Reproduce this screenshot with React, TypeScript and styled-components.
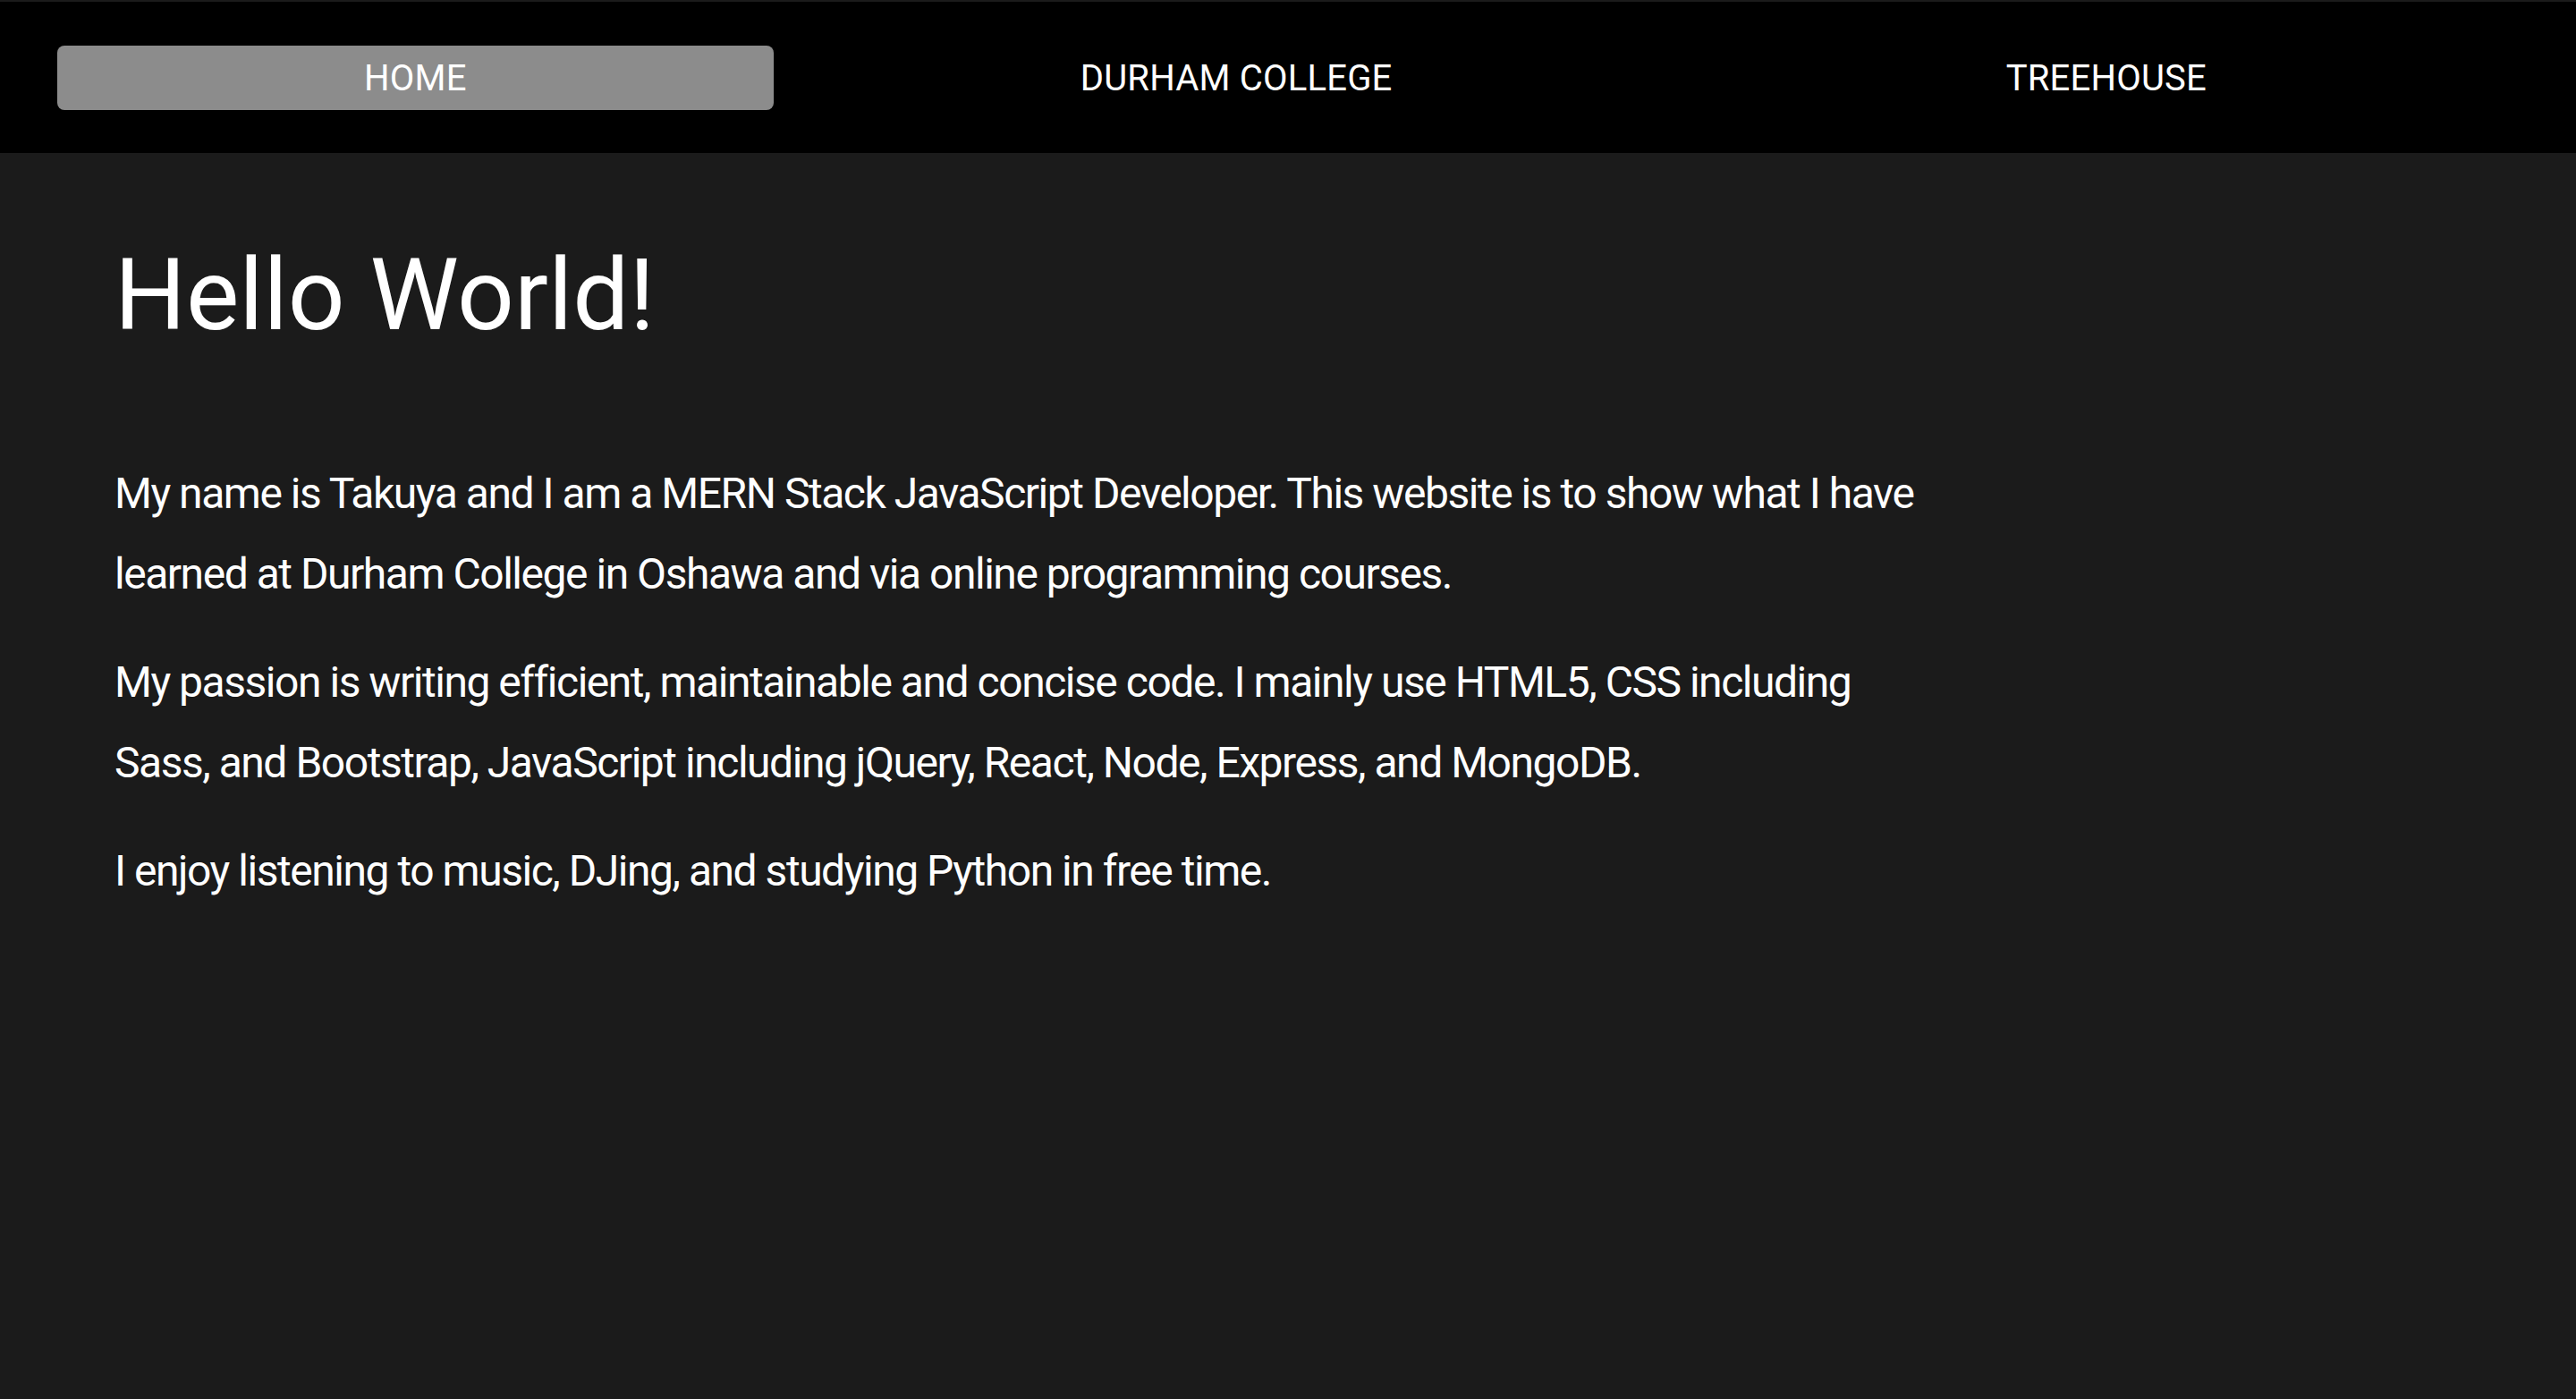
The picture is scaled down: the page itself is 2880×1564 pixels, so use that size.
import React from "react";
import styled, { createGlobalStyle } from "styled-components";

const GlobalStyle = createGlobalStyle`
  html, body {
    margin: 0;
    padding: 0;
    background: #1b1b1b;
  }
  body {
    font-family: Roboto, "Liberation Sans", sans-serif;
    color: #ffffff;
  }
  * { box-sizing: border-box; }
`;

const Page = styled.div`
  min-height: 1564px;
  background: #1b1b1b;
  padding-top: 2px;
  display: flex;
  flex-direction: column;
`;

const NavBar = styled.nav`
  height: 169px;
  background: #000000;
  display: flex;
  align-items: center;
  padding: 0 70px 0 64px;
`;

const NavItem = styled.a<{ $active?: boolean }>`
  flex: 1 1 auto;
  height: 72px;
  line-height: 74px;
  text-align: center;
  font-size: 40px;
  letter-spacing: 0.2px;
  color: #ffffff;
  text-decoration: none;
  border-radius: 8px;
  padding: 0 20px;
  background: ${(p) => (p.$active ? "#8c8c8c" : "transparent")};
`;

const Main = styled.main`
  padding: 92px 128px 0 128px;
`;

const Title = styled.h1`
  margin: 0 0 110px 0;
  font-size: 112px;
  font-weight: 400;
  line-height: 1.2;
`;

const Para = styled.p`
  margin: 0 0 31px 0;
  max-width: 2040px;
  font-size: 48px;
  line-height: 90px;
  letter-spacing: -1.47px;
  font-weight: 400;
`;

export default function App() {
  return (
    <>
      <GlobalStyle />
      <Page>
        <NavBar>
          <NavItem $active href="#">HOME</NavItem>
          <NavItem href="#">DURHAM COLLEGE</NavItem>
          <NavItem href="#">TREEHOUSE</NavItem>
        </NavBar>
        <Main>
          <Title>Hello World!</Title>
          <Para>
            My name is Takuya and I am a MERN Stack JavaScript Developer. This
            website is to show what I have learned at Durham College in Oshawa
            and via online programming courses.
          </Para>
          <Para>
            My passion is writing efficient, maintainable and concise code. I
            mainly use HTML5, CSS including Sass, and Bootstrap, JavaScript
            including jQuery, React, Node, Express, and MongoDB.
          </Para>
          <Para>
            I enjoy listening to music, DJing, and studying Python in free time.
          </Para>
        </Main>
      </Page>
    </>
  );
}
